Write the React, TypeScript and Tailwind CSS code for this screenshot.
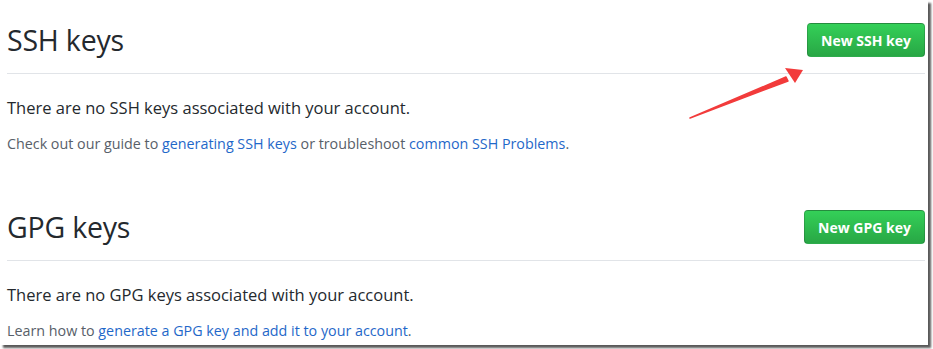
const font = { fontFamily: '"Open Sans", "Noto Sans", Arial, sans-serif' };

function KeySection({ title, button, empty, children }: { title: string; button: string; empty: string; children: React.ReactNode }) {
  return (
    <section>
      <div className="flex items-center justify-between pb-[16px] border-b border-[#e1e4e8]">
        <h2 className="text-[28.5px] leading-[34px] font-normal text-[#24292e] tracking-[-0.2px]">{title}</h2>
        <button className="h-[34px] px-[13px] rounded-[4px] border border-[rgba(27,31,35,0.2)] bg-gradient-to-b from-[#34d058] to-[#28a745] text-white text-[14px] font-bold">
          {button}
        </button>
      </div>
      <p className="mt-[22px] text-[16.5px] leading-[24px] text-[#24292e]">{empty}</p>
      <p className="mt-[14px] text-[14.3px] leading-[20px] text-[#586069]">{children}</p>
    </section>
  );
}

export default function App() {
  return (
    <div className="w-[933px] h-[349px] bg-white relative" style={font}>
      <div className="w-[928px] h-[345px] bg-white shadow-[3px_3px_2px_rgba(0,0,0,0.65)] pl-[7px] pr-[3px] pt-[23px]">
        <KeySection title="SSH keys" button="New SSH key" empty="There are no SSH keys associated with your account.">
          Check out our guide to <a className="text-[#1f68c9]">generating SSH keys</a> or troubleshoot{' '}
          <a className="text-[#1f68c9]">common SSH Problems</a>.
        </KeySection>
        <div className="h-[56px]" />
        <KeySection title="GPG keys" button="New GPG key" empty="There are no GPG keys associated with your account.">
          Learn how to <a className="text-[#1f68c9]">generate a GPG key and add it to your account</a>.
        </KeySection>
      </div>

      {/* red annotation arrow */}
      <svg className="absolute left-0 top-0 pointer-events-none" width="933" height="349">
        <path d="M690 118 L786 77 L788 81 Z" fill="#f23b3b" stroke="#f23b3b" strokeWidth="1.5" strokeLinejoin="round" />
        <path d="M803 70 L785 68 L795 83 Z" fill="#f23b3b" />
      </svg>
    </div>
  );
}
